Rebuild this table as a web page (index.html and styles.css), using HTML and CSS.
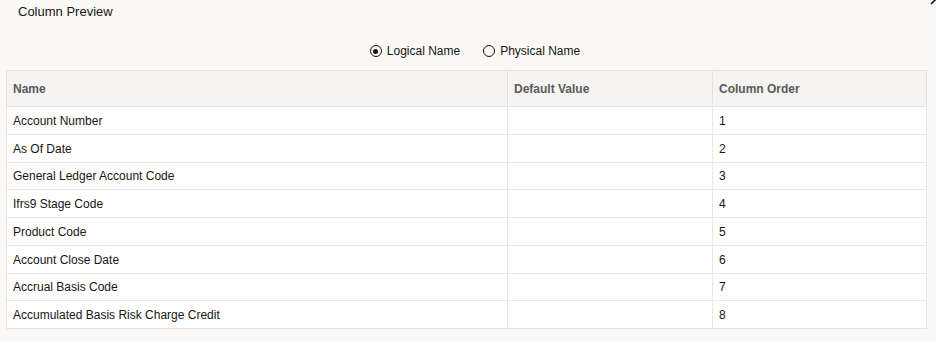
FILE: index.html
```html
<!DOCTYPE html>
<html>
<head>
<meta charset="utf-8">
<link rel="stylesheet" href="styles.css">
</head>
<body>
<div class="dialog">
  <div class="titlebar">
    <span class="title">Column Preview</span>
    <svg class="close" width="12" height="12" viewBox="0 0 12 12"><path d="M1 11 L11 1 M1 1 L11 11" stroke="#161513" stroke-width="1.6" fill="none"/></svg>
  </div>
  <div class="radios">
    <label class="radio"><span class="dot checked"></span>Logical Name</label>
    <label class="radio"><span class="dot"></span>Physical Name</label>
  </div>
  <table class="grid">
    <colgroup><col class="c1"><col class="c2"><col class="c3"></colgroup>
    <thead>
      <tr><th>Name</th><th>Default Value</th><th>Column Order</th></tr>
    </thead>
    <tbody>
      <tr><td>Account Number</td><td></td><td>1</td></tr>
      <tr><td>As Of Date</td><td></td><td>2</td></tr>
      <tr><td>General Ledger Account Code</td><td></td><td>3</td></tr>
      <tr><td>Ifrs9 Stage Code</td><td></td><td>4</td></tr>
      <tr><td>Product Code</td><td></td><td>5</td></tr>
      <tr><td>Account Close Date</td><td></td><td>6</td></tr>
      <tr><td>Accrual Basis Code</td><td></td><td>7</td></tr>
      <tr><td>Accumulated Basis Risk Charge Credit</td><td></td><td>8</td></tr>
    </tbody>
  </table>
</div>
</body>
</html>
```
FILE: styles.css
```css
html, body {
  margin: 0;
  padding: 0;
  background: #faf9f8;
  font-family: "Liberation Sans", Arial, sans-serif;
  color: #161513;
}
.dialog {
  width: 936px;
  height: 341px;
  overflow: hidden;
  position: relative;
}
.titlebar {
  height: 24px;
  padding-left: 18px;
  display: flex;
  align-items: center;
}
.title {
  font-size: 13px;
  margin-top: -2px;
}
.close {
  position: absolute;
  right: -6px;
  top: -7px;
}
.radios {
  display: flex;
  justify-content: center;
  gap: 23px;
  margin-top: 15px;
  height: 24px;
  align-items: center;
  padding-left: 14px;
  font-size: 12px;
}
.radio {
  display: flex;
  align-items: center;
  gap: 5px;
}
.dot {
  width: 12px;
  height: 12px;
  border: 1px solid #161513;
  border-radius: 50%;
  box-sizing: border-box;
  position: relative;
}
.dot.checked::after {
  content: "";
  position: absolute;
  left: 2.5px;
  top: 2.5px;
  width: 5px;
  height: 5px;
  border-radius: 50%;
  background: #161513;
}
.grid {
  margin: 7px 0 0 6px;
  width: 920px;
  border-collapse: collapse;
  border: 1px solid #e4e2df;
  font-size: 12px;
  table-layout: fixed;
}
.c1 { width: 501px; }
.c2 { width: 205px; }
.c3 { width: 214px; }
.grid th {
  background: #f5f4f2;
  color: #5b5a58;
  font-weight: bold;
  text-align: left;
  height: 35px;
  padding: 0 6px;
  border: 1px solid #e4e2df;
}
.grid td {
  background: #ffffff;
  height: 25.75px;
  padding: 1px 6px 0;
  border: 1px solid #e9e7e4;
}
```
